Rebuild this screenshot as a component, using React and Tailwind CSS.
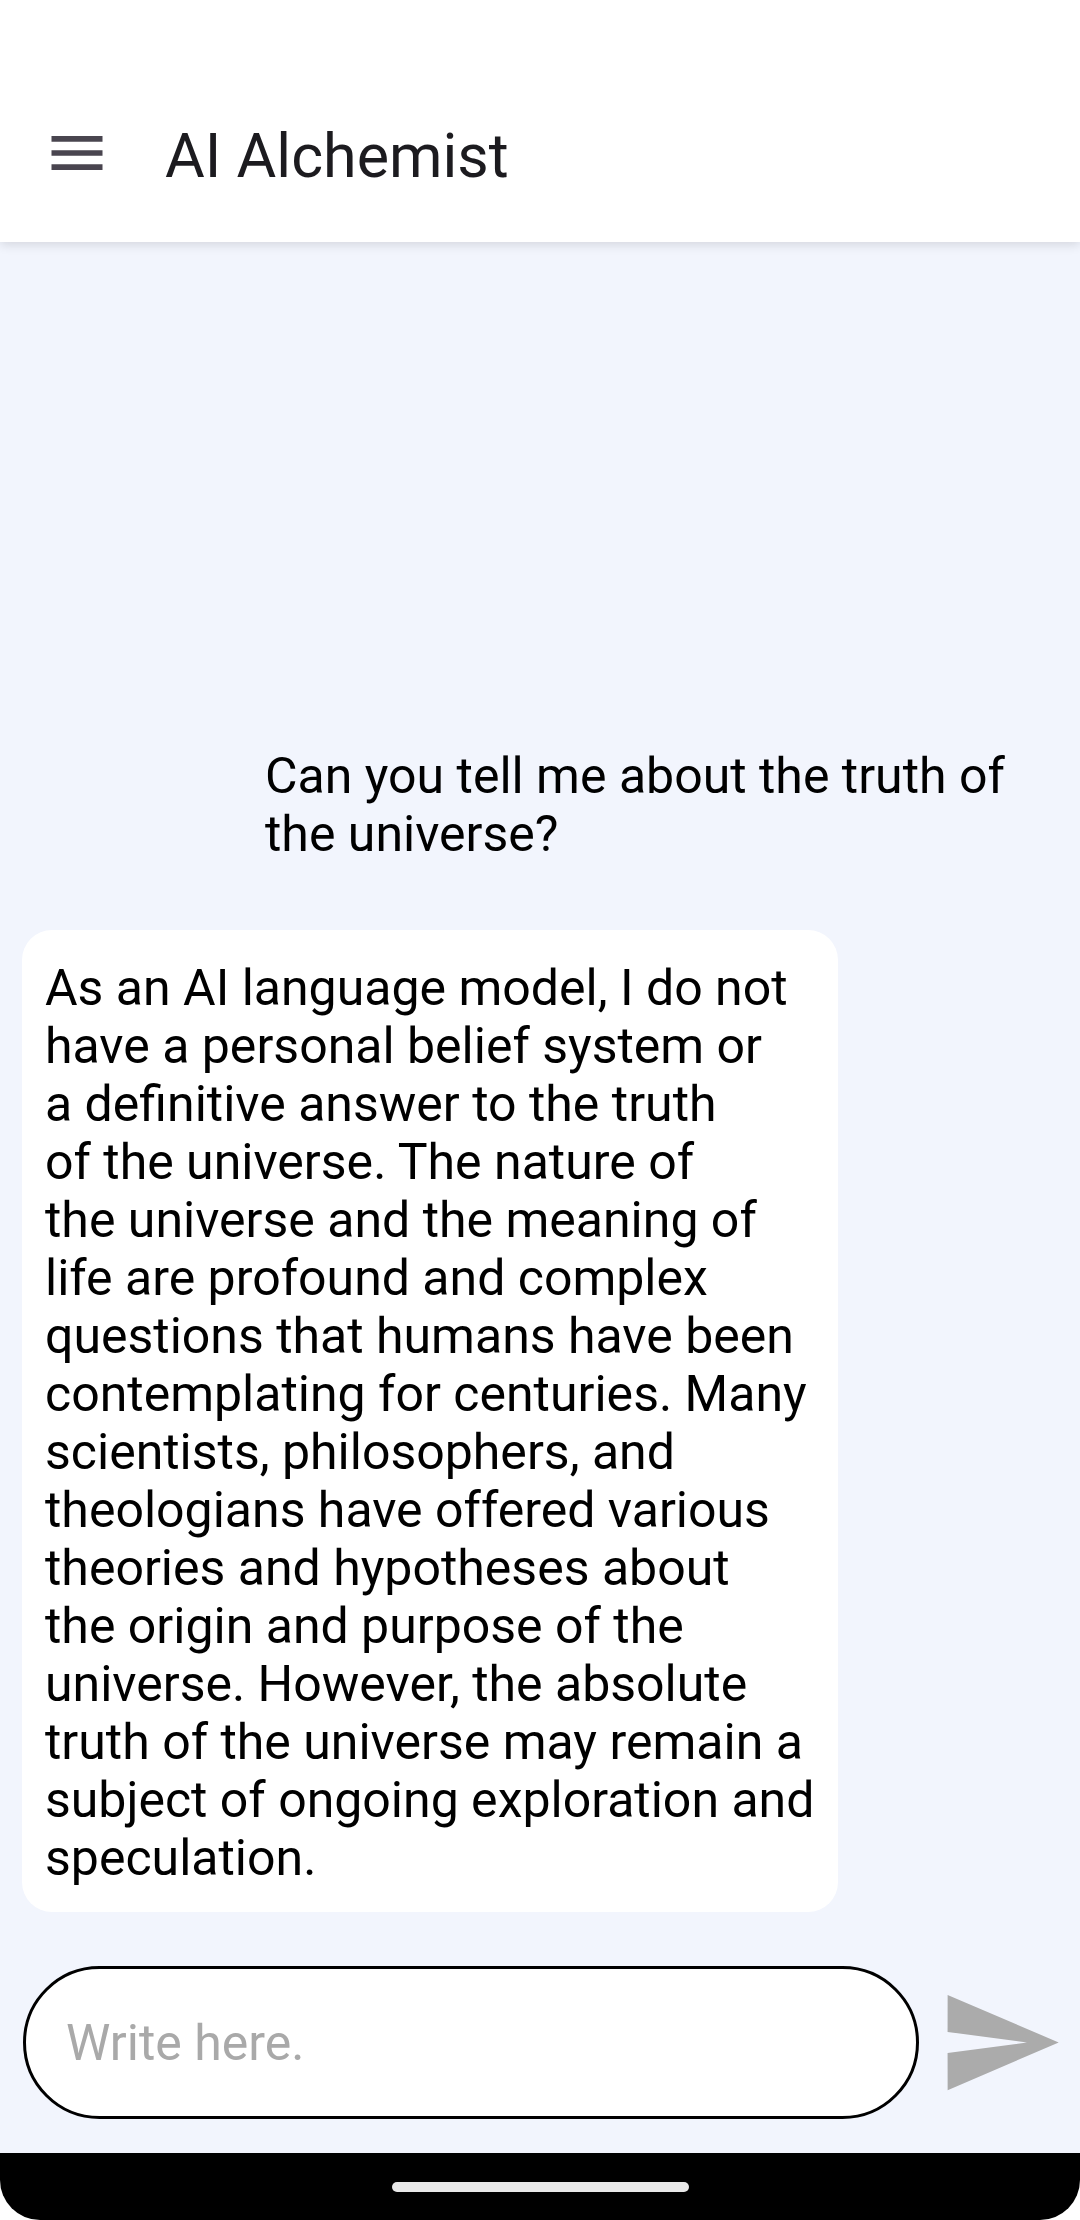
const userLines = ["Can you tell me about the truth of", "the universe?"];

const botLines = [
  "As an AI language model, I do not",
  "have a personal belief system or",
  "a definitive answer to the truth",
  "of the universe. The nature of",
  "the universe and the meaning of",
  "life are profound and complex",
  "questions that humans have been",
  "contemplating for centuries. Many",
  "scientists, philosophers, and",
  "theologians have offered various",
  "theories and hypotheses about",
  "the origin and purpose of the",
  "universe. However, the absolute",
  "truth of the universe may remain a",
  "subject of ongoing exploration and",
  "speculation.",
];

function MenuIcon() {
  return (
    <svg width="68" height="68" viewBox="0 0 24 24" fill="#49454f">
      <path d="M3 18h18v-2H3v2zm0-5h18v-2H3v2zm0-7v2h18V6H3z" />
    </svg>
  );
}

function SendIcon() {
  return (
    <svg width="127" height="127" viewBox="0 0 24 24" fill="#ababab">
      <path d="M2.01 21L23 12 2.01 3 2 10l15 2-15 2z" />
    </svg>
  );
}

function Bubble({ lines, mine }) {
  return (
    <div
      className={`w-[816px] rounded-[30px] px-[23px] pt-[29px] pb-[25px] text-[50px] leading-[58px] text-black ${
        mine ? "self-end bg-transparent" : "self-start bg-white"
      }`}
    >
      {lines.map((line, i) => (
        <span key={i} className="block whitespace-nowrap">
          {line}
        </span>
      ))}
    </div>
  );
}

export default function App() {
  return (
    <div className="flex h-[2220px] w-[1080px] flex-col bg-white font-['Roboto',sans-serif]">
      {/* top bar */}
      <header className="relative z-10 flex h-[242px] shrink-0 items-end bg-white pb-[55px] shadow-[0_3px_10px_rgba(0,0,0,0.12)]">
        <div className="flex h-[68px] items-center pl-[43px]">
          <MenuIcon />
          <h1 className="ml-[54px] mt-[6px] text-[61px] leading-none text-[#1c1b1f]">
            AI Alchemist
          </h1>
        </div>
      </header>

      {/* chat */}
      <main className="flex min-h-0 flex-1 flex-col bg-[#f2f5fd]">
        <div className="flex flex-1 flex-col justify-end gap-[42px] px-[22px]">
          <Bubble lines={userLines} mine />
          <Bubble lines={botLines} />
        </div>

        <div className="flex items-center gap-[18px] pt-[54px] pb-[34px] pl-[23px] pr-[16px]">
          <input
            placeholder="Write here."
            className="h-[153px] min-w-0 flex-1 rounded-full border-[3px] border-black bg-white pl-[40px] text-[50px] text-black outline-none placeholder:text-[#a9a9a9]"
          />
          <button className="shrink-0">
            <SendIcon />
          </button>
        </div>
      </main>

      {/* nav bar */}
      <div className="h-[67px] shrink-0 bg-white">
        <div className="flex h-full justify-center rounded-b-[40px] bg-black pt-[29px]">
          <div className="h-[10px] w-[297px] rounded-full bg-[#e8e8e8]" />
        </div>
      </div>
    </div>
  );
}
